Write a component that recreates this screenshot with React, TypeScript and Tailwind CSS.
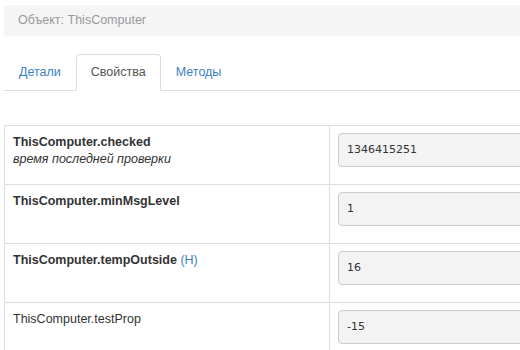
import React from "react";

type Prop = {
  name: string;
  bold?: boolean;
  note?: string;
  flag?: string;
  value: string;
};

const props: Prop[] = [
  { name: "ThisComputer.checked", bold: true, note: "время последней проверки", value: "1346415251" },
  { name: "ThisComputer.minMsgLevel", bold: true, value: "1" },
  { name: "ThisComputer.tempOutside", bold: true, flag: "(H)", value: "16" },
  { name: "ThisComputer.testProp", value: "-15" },
];

const tabs = ["Детали", "Свойства", "Методы"];

export default function App() {
  return (
    <div className="w-[520px] h-[350px] overflow-hidden bg-white font-['Liberation_Sans',Arial,sans-serif] text-[12.5px] text-[#333]">
      <div className="w-[620px] pt-[5px] px-[4px]">
        {/* breadcrumb */}
        <div className="h-[31px] rounded-[4px] bg-[#f5f5f5] px-[14px] flex items-center text-[#999]">
          Объект: ThisComputer
        </div>

        {/* tabs */}
        <div className="mt-[18px] flex border-b border-[#ddd]">
          {tabs.map((t, i) => (
            <div
              key={t}
              className={
                i === 1
                  ? "-mb-px h-[37px] px-[14px] flex items-center rounded-t-[4px] border border-[#ddd] border-b-white bg-white text-[#555]"
                  : "-mb-px h-[37px] px-[14px] flex items-center rounded-t-[4px] border border-transparent text-[#3a80c4]"
              }
            >
              {t}
            </div>
          ))}
        </div>

        {/* properties */}
        <div className="mt-[34px] border-l border-t border-[#ddd]">
          {props.map((p) => (
            <div key={p.name} className="flex h-[59px] border-b border-[#ddd]">
              <div className="w-[325px] shrink-0 border-r border-[#ddd] px-[8px] pt-[8px] leading-[17px]">
                <div>
                  <span className={p.bold ? "font-bold" : ""}>{p.name}</span>
                  {p.flag && <span className="text-[#3a80c4]"> {p.flag}</span>}
                </div>
                {p.note && <div className="italic">{p.note}</div>}
              </div>
              <div className="flex-1 px-[8px] pt-[7px]">
                <div className="h-[34px] rounded-[4px] border border-[#ccc] bg-[#f3f3f3] px-[8px] flex items-center font-['DejaVu_Sans',Verdana,sans-serif] text-[11px] text-[#333]">
                  {p.value}
                </div>
              </div>
            </div>
          ))}
        </div>
      </div>
    </div>
  );
}
